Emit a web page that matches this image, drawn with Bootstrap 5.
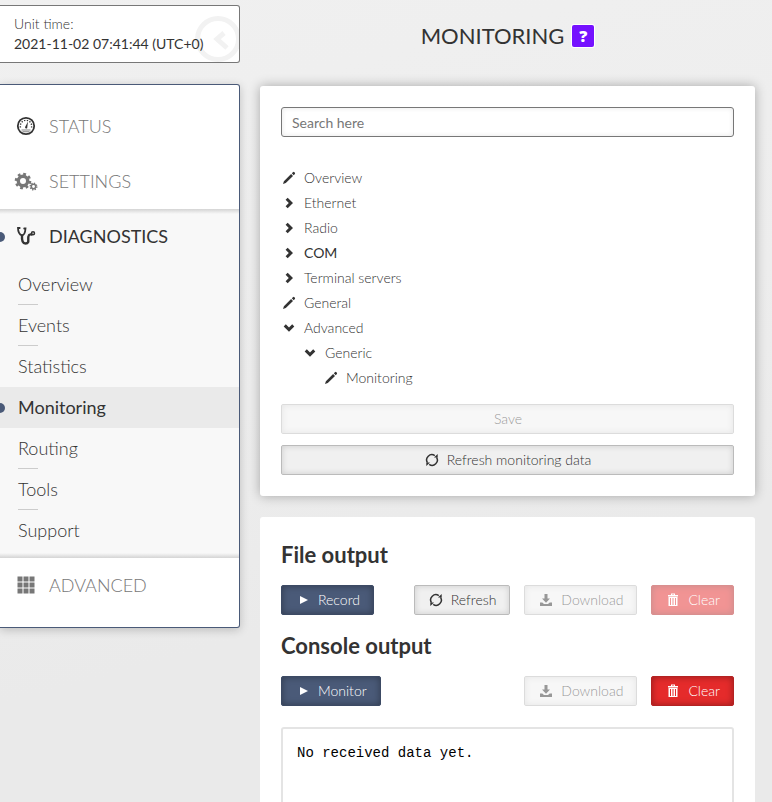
<!DOCTYPE html>
<html lang="en">
<head>
<meta charset="utf-8">
<meta name="viewport" content="width=device-width, initial-scale=1">
<title>Monitoring</title>
<link rel="stylesheet" href="https://cdn.jsdelivr.net/npm/bootstrap@5.3.0/dist/css/bootstrap.min.css">
<style>
body{font-family:Lato,"Liberation Sans",sans-serif;font-size:14px;font-weight:300;line-height:20px;color:#333;background:linear-gradient(165deg,#f0f0f0 0,#ededed 40%,#eaeaea 60%,#eaeaea 100%);min-height:100vh}
a{color:inherit;text-decoration:none}
svg{fill:currentColor;flex:none}
.side{flex:0 0 240px;padding-top:5px}
.unit-time{position:relative;overflow:hidden;height:58px;padding:8px 14px;border:1px solid #777;border-left:0;border-radius:0 3px 3px 0;background:#fff;margin-bottom:21px}
.clock{position:absolute;right:-2px;top:10px;color:#f2f2f2}
.menu-box{background:#fff;border:1px solid #4a5a78;border-left:0;border-radius:0 3px 3px 0;padding:14px 0;box-shadow:0 2px 10px rgba(0,0,0,.2)}
.top-link{height:55px;padding:0 0 2px 14px;gap:11px;font-size:18px;color:#777}
.top-link .ico{width:24px;display:flex;justify-content:center}
.open-group{background:linear-gradient(#d4d4d4,rgba(248,248,248,0)) top/100% 5px no-repeat,linear-gradient(rgba(248,248,248,0),#d4d4d4) bottom/100% 5px no-repeat,#f8f8f8;padding-bottom:7px}
.chosen{position:relative;color:#333;font-weight:400}
.chosen::before{content:"";position:absolute;left:-5px;top:50%;margin-top:-5px;width:10px;height:10px;border-radius:50%;background:#4a5a78}
.sub-link{position:relative;display:flex;align-items:center;height:41px;padding:0 0 2px 18px;font-size:18px}
.ruled::after{content:"";position:absolute;left:18px;bottom:0;width:20px;border-bottom:1px solid #ccc}
.sub-link.chosen{background:#eaeaea}
.main{padding:0 17px 20px 20px}
.head{height:86px;padding-bottom:14px;gap:8px}
.head h1{font-size:22px;line-height:28px;font-weight:400}
.help{width:22px;height:22px;padding:0;border:0;border-radius:2px;background:#7511ff;color:#fff;box-shadow:0 0 0 1px #fff;font:800 16px/22px "Open Sans",sans-serif}
.panel{background:#fff;border-radius:3px;padding:21px}
.lifted{box-shadow:0 0 12px rgba(0,0,0,.3);margin-bottom:21px}
.output{padding-top:24px}
.search{height:30px;font-size:14px;font-weight:400;padding:4px 10px;border:1px solid #777;border-radius:3px;box-shadow:inset 0 0 5px rgba(0,0,0,.1);margin-bottom:28px}
.search::placeholder{color:#777}
.tree a{display:flex;align-items:center;gap:7px;height:25px}
.tree ul{padding-left:21px}
.tree svg{width:16px;height:16px}
.tree{margin-bottom:14px}
.stack{row-gap:11px}
.ctl{display:inline-flex;align-items:center;justify-content:center;gap:8px;height:30px;padding:0 13px 0 14px;font-size:14px;line-height:20px;font-weight:300;border:1px solid #bbb;border-radius:2px;background:#f0f0f0;color:#333;box-shadow:inset 0 0 6px rgba(0,0,0,.15)}
.ctl:disabled{opacity:.5;color:#333;background:#f0f0f0;border-color:#bbb}
.ctl:hover{background:#e8e8e8}
.ctl-blue,.ctl-blue:hover{background:#4a5a78;color:#fff;border-color:#3c4a64;box-shadow:inset 0 0 7px rgba(0,0,0,.35)}
.ctl-red,.ctl-red:hover,.ctl-red:disabled{background:#e52b2b;color:#fff;border-color:#b42222;box-shadow:inset 0 0 7px rgba(0,0,0,.35)}
.tail{gap:14px}
.panel h2{font-size:22px;line-height:28px;font-weight:700;margin-bottom:16px}
.first-row{margin-bottom:17px}
.console{height:200px;margin-top:21px;padding:14px;border:2px solid #e4e4e4;border-radius:3px;color:#000;font:400 14px/20px "Liberation Mono","Courier New",monospace}
</style>
<script src="https://cdn.jsdelivr.net/npm/bootstrap@5.3.0/dist/js/bootstrap.bundle.min.js"></script>
</head>
<body>
<svg class="d-none" aria-hidden="true">
<symbol id="pencil" viewBox="0 0 16 16"><path d="M2 14 2.900 11.200 10.100 4 12 5.900 4.800 13.100zM10.800 3.300 12.200 1.900Q12.800 1.600 13.400 2.200L13.900 2.800Q14.300 3.400 13.900 3.900L12.700 5.200z"/></symbol>
<symbol id="right" viewBox="0 0 16 16"><path d="M4.600 4.800 6.700 2.700 12 8 6.700 13.300 4.600 11.200 7.800 8z"/></symbol>
<symbol id="down" viewBox="0 0 16 16"><path d="M4.800 4.300 2.700 6.400 8 11.700 13.300 6.400 11.200 4.300 8 7.500z"/></symbol>
<symbol id="reload" viewBox="0 0 14 14"><path fill="none" stroke="currentColor" stroke-width="1.500" d="M2.500 9.700A5.200 5.200 0 0 1 9.800 2.600M11.500 4.300A5.200 5.200 0 0 1 4.200 11.400"/><path d="M9 4.500h3.700V1zM5 9.500H1.300V13z"/></symbol>
<symbol id="play" viewBox="0 0 14 14"><path d="M4 3v8l8-4z"/></symbol>
<symbol id="save" viewBox="0 0 14 14"><path d="M5.500 1h3v4.500H11L7 9.800 3 5.500h2.500zM1 9.500h2.300L5 11h4l1.700-1.500H13V13H1z"/></symbol>
<symbol id="bin" viewBox="0 0 14 14"><path fill-rule="evenodd" d="M5 .5h4v1.500h3v1.500H2V2h3zM6 1.500V2h2v-.5zM2.500 4h9v9h-9zM4 5v7h1V5zm2.500 0v7h1V5zM9 5v7h1V5z"/></symbol>
</svg>
<div class="d-flex align-items-start">
<aside class="side">
<div class="unit-time">
<svg class="clock" width="46" height="46" viewBox="0 0 46 46" aria-hidden="true"><circle cx="23" cy="23" r="20.500" fill="none" stroke="currentColor" stroke-width="5"/><path fill="none" stroke="currentColor" stroke-width="5" d="M29 17 22 23 32 32"/></svg>
<div class="position-relative">Unit time:</div>
<div class="position-relative fw-normal">2021-11-02 07:41:44 (UTC+0)</div>
</div>
<nav class="menu-box" aria-label="Main menu">
<a class="top-link d-flex align-items-center" href="#"><span class="ico"><svg width="20" height="20" viewBox="0 0 20 20" color="#333"><circle cx="10" cy="10" r="8.200" fill="none" stroke="currentColor" stroke-width="1.800"/><path fill="none" stroke="currentColor" stroke-dasharray="1.300 1.500" stroke-width="1.400" d="M4.500 11.500A5.700 5.700 0 1 1 15.500 11.500"/><path d="M9 11.300 12 5.500 11.200 12.200Q9.500 13.200 9 11.300z"/><path d="M5.500 13.500h9v1h-9zM6.500 15.200h7v1h-7z" opacity=".6"/></svg></span>STATUS</a>
<a class="top-link d-flex align-items-center" href="#"><span class="ico"><svg width="24" height="20" viewBox="0 0 24 20"><circle cx="9" cy="10" r="4.700" fill="none" stroke="currentColor" stroke-width="3.400"/><circle cx="9" cy="10" r="7" fill="none" stroke="currentColor" stroke-width="2.600" stroke-dasharray="2.750 2.748"/><circle cx="19.500" cy="15.500" r="2.200" fill="none" stroke="currentColor" stroke-width="1.500"/><circle cx="19.500" cy="15.500" r="3.300" fill="none" stroke="currentColor" stroke-width="1.400" stroke-dasharray="1.300 1.292"/></svg></span>SETTINGS</a>
<div class="open-group">
<a class="top-link chosen d-flex align-items-center" href="#"><span class="ico"><svg width="20" height="20" viewBox="0 0 20 20"><g fill="none" stroke="currentColor" stroke-width="1.800" stroke-linecap="round"><path d="M3.700 2H2Q2 8 6 9.500 9 9 9.500 2.500H8.200"/><path stroke-width="2.400" d="M6 9.500Q5.500 17.500 9.500 17.500C14 17.500 11.500 13.500 12.500 10Q13 8 15.500 8.500"/><circle cx="17" cy="7.200" r="1.500" stroke-width="1.500"/></g></svg></span>DIAGNOSTICS</a>
<a class="sub-link ruled" href="#">Overview</a>
<a class="sub-link ruled" href="#">Events</a>
<a class="sub-link" href="#">Statistics</a>
<a class="sub-link chosen" href="#" aria-current="page">Monitoring</a>
<a class="sub-link ruled" href="#">Routing</a>
<a class="sub-link ruled" href="#">Tools</a>
<a class="sub-link" href="#">Support</a>
</div>
<a class="top-link d-flex align-items-center" href="#"><span class="ico"><svg width="18" height="18" viewBox="0 0 18 18"><path d="M.5.500H5.500V5.500H.5zM6.500.500H11.500V5.500H6.500zM12.500.500H17.500V5.500H12.500zM.5 6.500H5.500V11.500H.5zM6.500 6.500H11.500V11.500H6.500zM12.500 6.500H17.500V11.500H12.500zM.5 12.500H5.500V17.500H.5zM6.500 12.500H11.500V17.500H6.500zM12.500 12.500H17.500V17.500H12.500z"/></svg></span>ADVANCED</a>
</nav>
</aside>
<main class="main flex-grow-1">
<header class="head d-flex align-items-center justify-content-center"><h1 class="m-0">MONITORING</h1><button class="help" type="button" aria-label="Help">?</button></header>
<section class="panel lifted">
<input class="form-control search" type="search" placeholder="Search here" aria-label="Search here">
<ul class="tree list-unstyled">
<li><a href="#"><svg><use href="#pencil"/></svg>Overview</a></li>
<li><a href="#"><svg><use href="#right"/></svg>Ethernet</a></li>
<li><a href="#"><svg><use href="#right"/></svg>Radio</a></li>
<li><a class="fw-normal" href="#"><svg><use href="#right"/></svg>COM</a></li>
<li><a href="#"><svg><use href="#right"/></svg>Terminal servers</a></li>
<li><a href="#"><svg><use href="#pencil"/></svg>General</a></li>
<li><a href="#"><svg><use href="#down"/></svg>Advanced</a>
<ul class="list-unstyled"><li><a href="#"><svg><use href="#down"/></svg>Generic</a>
<ul class="list-unstyled"><li><a href="#"><svg><use href="#pencil"/></svg>Monitoring</a></li></ul></li></ul></li>
</ul>
<div class="d-grid stack">
<button class="btn ctl" type="button" disabled>Save</button>
<button class="btn ctl" type="button"><svg width="14" height="14"><use href="#reload"/></svg>Refresh monitoring data</button>
</div>
</section>
<section class="panel output">
<h2>File output</h2>
<div class="d-flex justify-content-between first-row">
<button class="btn ctl ctl-blue" type="button"><svg width="14" height="14"><use href="#play"/></svg>Record</button>
<div class="d-flex tail">
<button class="btn ctl" type="button"><svg width="14" height="14"><use href="#reload"/></svg>Refresh</button>
<button class="btn ctl" type="button" disabled><svg width="14" height="14"><use href="#save"/></svg>Download</button>
<button class="btn ctl ctl-red" type="button" disabled><svg width="14" height="14"><use href="#bin"/></svg>Clear</button>
</div>
</div>
<h2>Console output</h2>
<div class="d-flex justify-content-between">
<button class="btn ctl ctl-blue" type="button"><svg width="14" height="14"><use href="#play"/></svg>Monitor</button>
<div class="d-flex tail">
<button class="btn ctl" type="button" disabled><svg width="14" height="14"><use href="#save"/></svg>Download</button>
<button class="btn ctl ctl-red" type="button"><svg width="14" height="14"><use href="#bin"/></svg>Clear</button>
</div>
</div>
<pre class="console mb-0">No received data yet.</pre>
</section>
</main>
</div>
</body>
</html>
